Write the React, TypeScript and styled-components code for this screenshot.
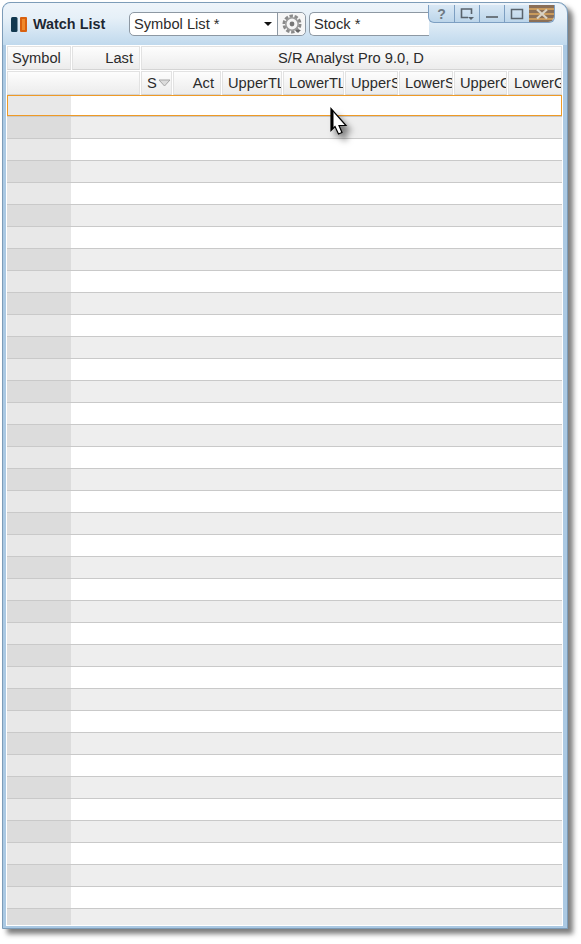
import { createGlobalStyle, styled } from 'styled-components';

const GlobalStyle = createGlobalStyle`
  html, body {
    margin: 0;
    padding: 0;
    background: #fff;
    overflow: hidden;
  }
`;

const SPage = styled.div`
  width: 581px;
  height: 944px;
  padding: 2px 0 0 2px;
  box-sizing: border-box;
  font-family: 'Liberation Sans', Arial, sans-serif;
  font-size: 14.67px;
  color: #2b2b2b;
`;

const SWindow = styled.div`
  position: relative;
  width: 566px;
  height: 927px;
  box-sizing: border-box;
  display: flex;
  flex-direction: column;
  padding: 0 4px 2px 3px;
  background: #abc9e3;
  border: 1px solid #7d9cb8;
  border-radius: 8px 10px 0 0;
  box-shadow: 5px 5px 5px rgba(40, 40, 40, 0.6);
`;

const STitleBar = styled.div`
  display: flex;
  align-items: center;
  flex: 0 0 42px;
  margin: 0 -4px 0 -3px;
  padding: 0 0 1px 8px;
  box-sizing: border-box;
  background: linear-gradient(#eef4fa 0%, #e6f0f8 35%, #c0d9ed 100%);
  border-radius: 8px 10px 0 0;
`;

const SLogo = styled.svg`
  width: 16px;
  height: 15px;
  flex: none;
  margin-top: 2px;
`;

const STitle = styled.div`
  width: 96px;
  margin-left: 6px;
  font-weight: bold;
  font-size: 14.4px;
  color: #1d2733;
  text-shadow: 0 0 2px rgba(255, 255, 255, 0.8);
`;

const SCombo = styled.div`
  display: flex;
  height: 24px;
  box-sizing: border-box;
  background: #fff;
  border: 1px solid #8d98a3;
  border-radius: 5px;
`;

const SComboLabel = styled.div`
  display: flex;
  align-items: center;
  justify-content: space-between;
  width: 147px;
  padding: 0 5px 0 4px;
  box-sizing: border-box;
`;

const SArrow = styled.span`
  width: 0;
  height: 0;
  border-left: 4px solid transparent;
  border-right: 4px solid transparent;
  border-top: 4px solid #111;
`;

const SGearButton = styled.div`
  display: flex;
  align-items: center;
  justify-content: center;
  width: 27px;
  border-left: 1px solid #8d98a3;
  background: #f6f6f6;
  border-radius: 0 5px 5px 0;
`;

const SStock = styled(SCombo)`
  width: 120px;
  margin-left: 3px;
  padding-left: 4px;
  align-items: center;
  border-right: none;
  border-radius: 5px 0 0 5px;
`;

const SControls = styled.div`
  position: absolute;
  top: 2px;
  right: 12px;
  display: flex;
  height: 18px;
  box-sizing: border-box;
  background: linear-gradient(#d9e8f5, #bcd5ea);
  border: 1px solid #7d9fc2;
  border-top: none;
  border-radius: 0 0 6px 6px;
`;

const SControl = styled.div<{ $w: number }>`
  width: ${({ $w }) => $w}px;
  box-sizing: border-box;
  display: flex;
  align-items: center;
  justify-content: center;
  border-left: 1px solid #7d9fc2;
  &:first-child {
    border-left: none;
  }
`;

const SClose = styled(SControl)`
  border-left: none;
  border-radius: 0 0 6px 0;
  background: repeating-linear-gradient(#8a6f58 0 3px, #c99a5c 3px 5px);
`;

const SHelp = styled.span`
  font-weight: bold;
  font-size: 14px;
  color: #6e7a84;
`;

const SGrid = styled.div`
  flex: 1;
  min-height: 0;
  display: flex;
  flex-direction: column;
  background: #fff;
  padding: 1px;
  overflow: hidden;
`;

const SHeaderRow = styled.div`
  display: flex;
  gap: 1px;
  flex: none;
  height: 24px;
  margin-bottom: 1px;

  & + & {
    margin-bottom: 0;
  }
`;

const SHeaderCell = styled.div<{ $w?: number; $align?: string }>`
  ${({ $w }) => ($w ? `width: ${$w}px; flex: none;` : 'flex: 1;')}
  display: flex;
  align-items: center;
  justify-content: ${({ $align }) => $align || 'flex-start'};
  box-sizing: border-box;
  padding: 0 6px 0 5px;
  overflow: hidden;
  white-space: nowrap;
  background: linear-gradient(#fdfdfd, #ececec);
  border: 1px solid #e2e2e2;
  border-bottom-color: #d4d4d4;
`;

const SSymbolCell = styled(SHeaderCell)`
  padding-left: 4px;
`;

const SSort = styled.svg`
  flex: none;
  width: 13px;
  height: 8px;
  margin: 0 0 0 1px;
`;

const SRows = styled.div`
  flex: 1;
  min-height: 0;
  overflow: hidden;
`;

const SRow = styled.div<{ $alt: boolean; $selected?: boolean }>`
  display: flex;
  height: 22px;
  box-sizing: border-box;
  background: ${({ $alt }) => ($alt ? '#eeeeee' : '#ffffff')};
  border-bottom: 1px solid #c9c9c9;
  ${({ $selected }) => $selected && 'box-shadow: inset 0 0 0 1px #ee9a26; padding: 1px 0 1px 1px;'}
`;

const SRowHead = styled.div<{ $alt: boolean; $selected?: boolean }>`
  width: ${({ $selected }) => ($selected ? 63 : 64)}px;
  background: ${({ $alt }) => ($alt ? '#dcdcdc' : '#e8e8e8')};
`;

const SCursor = styled.svg`
  position: absolute;
  left: 326px;
  top: 103px;
  width: 24px;
  height: 36px;
  filter: drop-shadow(5px 6px 3px rgba(0, 0, 0, 0.5));
`;

const subColumns = [
  { label: 'Act', w: 48, align: 'flex-end' },
  { label: 'UpperTL', w: 60 },
  { label: 'LowerTL', w: 61 },
  { label: 'UpperS', w: 53 },
  { label: 'LowerS', w: 54 },
  { label: 'UpperG', w: 53 },
];

const rows = Array.from({ length: 38 }, (_, i) => i);

const App = () => (
  <SPage>
    <GlobalStyle />
    <SWindow>
      <STitleBar>
        <SLogo viewBox='0 0 16 15'>
          <rect x='0' y='0' width='6.5' height='15' rx='1.5' fill='#12384f' />
          <rect x='9' y='0' width='7' height='15' rx='1' fill='#d9610f' />
          <rect x='11' y='2' width='3' height='11' fill='#f08a2c' />
        </SLogo>
        <STitle>Watch List</STitle>
        <SCombo>
          <SComboLabel>
            Symbol List *
            <SArrow />
          </SComboLabel>
          <SGearButton>
            <svg width='22' height='22' viewBox='0 0 22 22'>
              <circle cx='11' cy='11' r='8' fill='none' stroke='#8a8a8a' strokeWidth='3' strokeDasharray='3.4 1.6' />
              <circle cx='11' cy='11' r='6.2' fill='none' stroke='#9a9a9a' strokeWidth='1.5' />
              <circle cx='11' cy='11' r='2.4' fill='#777' />
              <path d='M14 17h6l-3 3z' fill='#666' />
            </svg>
          </SGearButton>
        </SCombo>
        <SStock>Stock *</SStock>
      </STitleBar>
      <SControls>
        <SControl $w={25}>
          <SHelp>?</SHelp>
        </SControl>
        <SControl $w={25}>
          <svg width='16' height='14' viewBox='0 0 16 14'>
            <path d='M9 10.5H2.5V2h10v5' fill='none' stroke='#59636d' strokeWidth='1.6' />
            <path d='M9 10h6l-3 3z' fill='#59636d' />
          </svg>
        </SControl>
        <SControl $w={25}>
          <svg width='14' height='14' viewBox='0 0 14 14'>
            <rect x='1' y='9' width='12' height='2' fill='#6d7780' />
          </svg>
        </SControl>
        <SControl $w={25}>
          <svg width='14' height='12' viewBox='0 0 14 12'>
            <rect x='1.5' y='1.5' width='11' height='9' fill='none' stroke='#59636d' strokeWidth='1.5' />
          </svg>
        </SControl>
        <SClose $w={25}>
          <svg width='18' height='12' viewBox='0 0 18 12'>
            <path d='M4 1.5l10 9M14 1.5l-10 9' stroke='#d9d2c4' strokeWidth='2.2' />
          </svg>
        </SClose>
      </SControls>
      <SGrid>
        <SHeaderRow>
          <SSymbolCell $w={64}>Symbol</SSymbolCell>
          <SHeaderCell $w={68} $align='flex-end'>
            Last
          </SHeaderCell>
          <SHeaderCell $align='center'>S/R Analyst Pro 9.0, D</SHeaderCell>
        </SHeaderRow>
        <SHeaderRow>
          <SHeaderCell $w={133} />
          <SHeaderCell $w={31}>
            S
            <SSort viewBox='0 0 13 8'>
              <path d='M1 1h11l-5.5 6z' fill='#dcdcdc' stroke='#a5a5a5' />
            </SSort>
          </SHeaderCell>
          {subColumns.map((col) => (
            <SHeaderCell key={col.label} $w={col.w} $align={col.align}>
              {col.label}
            </SHeaderCell>
          ))}
          <SHeaderCell>LowerG</SHeaderCell>
        </SHeaderRow>
        <SRows>
          {rows.map((i) => (
            <SRow key={i} $alt={i % 2 === 1} $selected={i === 0}>
              <SRowHead $alt={i % 2 === 1} $selected={i === 0} />
            </SRow>
          ))}
        </SRows>
      </SGrid>
      <SCursor viewBox='0 0 24 36'>
        <path
          d='M2 2.5V24.5l4-4 3.5 7.5 3.5-1.5-3-7h7z'
          fill='#fff'
          stroke='#000'
          strokeWidth='1.2'
          strokeLinejoin='miter'
        />
        <path d='M2 2.5V24.5l2.5-2.5V5z' fill='#000' />
      </SCursor>
    </SWindow>
  </SPage>
);

export default App;
